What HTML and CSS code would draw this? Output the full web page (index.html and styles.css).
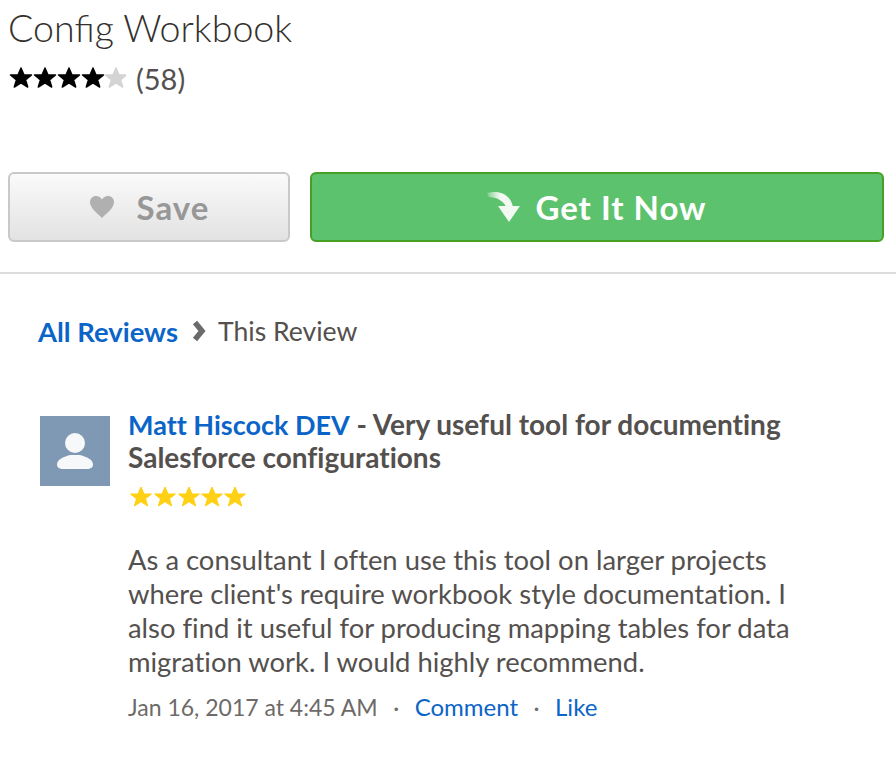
FILE: index.html
```html
<!DOCTYPE html>
<html lang="en">
<head>
    <meta charset="UTF-8">
    <title>Config Workbook</title>
    <link rel="stylesheet" href="styles.css">
</head>
<body>
    <svg class="defs" width="0" height="0">
        <defs>
            <path id="star" d="M11 1l3 7h7.500l-6 4.800 2.200 7.200-6.700-4.200-6.700 4.200 2.200-7.200-6-4.800h7.500z"/>
            <linearGradient id="arrowFade" x1="0" x2="1" y1="0" y2="0">
                <stop offset="0" stop-color="#fff" stop-opacity="0.2"/>
                <stop offset="0.5" stop-color="#f2f8f2"/>
            </linearGradient>
        </defs>
    </svg>
    <div class="listing">
        <h1 class="title">Config Workbook</h1>
        <div class="rating">
            <svg class="stars" width="118" height="22" viewBox="0 0 118 22">
                <use href="#star" x="2"/>
                <use href="#star" x="26"/>
                <use href="#star" x="50"/>
                <use href="#star" x="74"/>
                <use href="#star" x="97" class="star-off"/>
            </svg>
            <span class="count">(58)</span>
        </div>
        <div class="actions">
            <a class="btn btn-save">
                <svg width="26" height="24" viewBox="0 0 26 24"><path fill="#b0b0b0" d="M13 23C8 18 1 13 1 7c0-3.500 2.700-6 6-6 2.600 0 4.800 1.400 6 3.600C14.200 2.400 16.400 1 19 1c3.300 0 6 2.500 6 6 0 6-7 11-12 16z"/></svg>
                Save
            </a>
            <a class="btn btn-get">
                <svg width="34" height="32" viewBox="0 0 34 32">
                    <path fill="url(#arrowFade)" d="M0 2C11-1 23 2 26 16h-7C17 10 9 6 2 6z"/>
                    <path fill="#f2f8f2" d="M11 15h22L22 31z"/>
                </svg>
                Get It Now
            </a>
        </div>
    </div>
    <div class="review-panel">
        <div class="crumbs">
            <a class="link-strong">All Reviews</a>
            <svg width="16" height="22" viewBox="0 0 16 22"><path fill="none" stroke="#6b6b6b" stroke-width="5.500" d="M5 2.500l7 8.500-7 8.500"/></svg>
            <span>This Review</span>
        </div>
        <div class="review">
            <div class="avatar">
                <svg width="36" height="36" viewBox="0 0 36 36">
                    <ellipse fill="#f6f8fa" cx="18" cy="10" rx="10" ry="10"/>
                    <path fill="#f6f8fa" d="M6 36c-3.500 0-6-1.500-6-4.500 0-5 6-7.500 13-9.500h10c7 2 13 4.500 13 9.500 0 3-2.500 4.500-6 4.500z"/>
                </svg>
            </div>
            <div class="review-body">
                <h2 class="review-title"><a class="link-strong">Matt Hiscock DEV</a> - Very useful tool for documenting Salesforce configurations</h2>
                <svg class="review-stars" width="120" height="24" viewBox="0 0 120 24">
                    <use href="#star" x="2"/>
                    <use href="#star" x="26"/>
                    <use href="#star" x="50"/>
                    <use href="#star" x="73"/>
                    <use href="#star" x="96"/>
                </svg>
                <p class="review-text">As a consultant I often use this tool on larger projects where client's require workbook style documentation. I also find it useful for producing mapping tables for data migration work. I would highly recommend.</p>
                <div class="review-meta">
                    <span>Jan 16, 2017 at 4:45 AM</span>
                    <span>·</span>
                    <a class="link">Comment</a>
                    <span>·</span>
                    <a class="link">Like</a>
                </div>
            </div>
        </div>
    </div>
</body>
</html>
```

FILE: styles.css
```css
body {
    margin: 0;
    background: #fff;
    font-family: Lato, "Open Sans", sans-serif;
    color: #54504e;
    overflow: hidden;
}
.defs {
    display: block;
}
.listing {
    padding: 6px 12px 30px 8px;
    border-bottom: 2px solid #dcdcdc;
}
.title {
    margin: 0;
    font-size: 37.6px;
    line-height: 44px;
    font-weight: 300;
    color: #33302e;
}
.rating {
    display: flex;
    align-items: center;
    gap: 10px;
    height: 32px;
    margin-top: 12px;
}
.stars {
    fill: #000;
    stroke: #000;
    stroke-width: 1.5;
    stroke-linejoin: round;
}
.star-off {
    fill: #d4d4d4;
    stroke: #d4d4d4;
}
.count {
    font-size: 29px;
    color: #54504e;
}
.actions {
    display: flex;
    gap: 20px;
    margin-top: 78px;
}
.btn {
    display: flex;
    align-items: center;
    justify-content: center;
    box-sizing: border-box;
    height: 70px;
    border-radius: 6px;
    font-size: 33px;
    font-weight: 700;
    letter-spacing: 1px;
}
.btn-save {
    width: 282px;
    gap: 22px;
    border: 2px solid #c9c9c9;
    background: linear-gradient(#fafafa, #e2e2e2);
    color: #979797;
}
.btn-get {
    flex: 1;
    gap: 14px;
    border: 2px solid #47a025;
    background: #5cc26d;
    color: #fff;
}
.review-panel {
    padding: 0 81px 0 38px;
}
.crumbs {
    display: flex;
    align-items: center;
    gap: 12px;
    height: 40px;
    margin-top: 37px;
    font-size: 26.6px;
}
.crumbs .link-strong {
    font-size: 27.4px;
}
.link-strong {
    font-weight: 700;
    color: #0b65c8;
}
.link {
    color: #0b65c8;
}
.review {
    display: flex;
    align-items: flex-start;
    gap: 18px;
    margin-top: 57px;
    margin-left: 2px;
    font-variant-ligatures: none;
}
.avatar {
    display: flex;
    align-items: center;
    justify-content: center;
    flex-shrink: 0;
    width: 70px;
    height: 70px;
    margin-top: 8px;
    background: #7f99b4;
}
.review-title {
    margin: 0;
    font-size: 28px;
    line-height: 33px;
    font-weight: 700;
    color: #54504e;
}
.review-title .link-strong {
    font-size: 27px;
}
.review-stars {
    display: block;
    margin-top: 12px;
    fill: #ffd014;
    stroke: #ffd014;
    stroke-width: 1;
    stroke-linejoin: round;
}
.review-text {
    margin: 33px 0 0;
    font-size: 27.4px;
    line-height: 34px;
    color: #54504e;
}
.review-meta {
    display: flex;
    align-items: center;
    gap: 15.5px;
    margin-top: 11px;
    font-size: 23px;
    line-height: 34px;
    color: #6e6a68;
}
.review-meta .link {
    font-size: 24px;
}
```
